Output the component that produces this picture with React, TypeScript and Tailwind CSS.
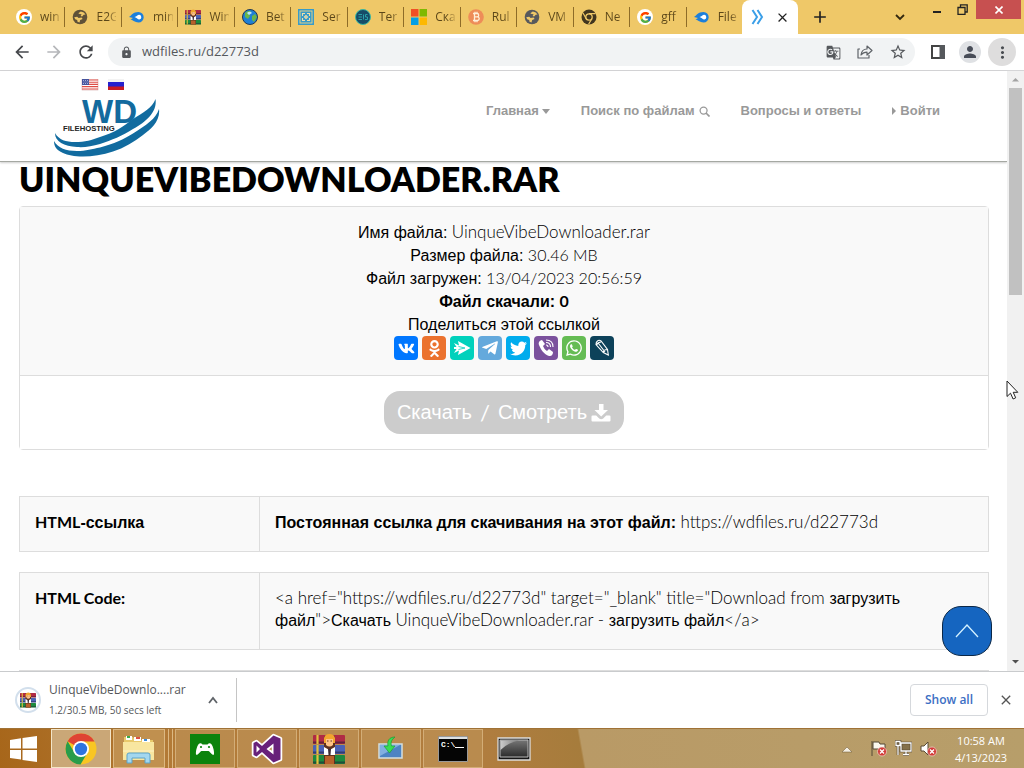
import React from 'react';
import { FaVk, FaOdnoklassniki, FaTelegramPlane, FaTwitter, FaWhatsapp } from 'react-icons/fa';
import { MdArrowBack, MdArrowForward, MdRefresh, MdLock, MdPerson, MdMoreVert, MdGTranslate, MdStarBorder, MdClose, MdAdd } from 'react-icons/md';
import { FcGoogle } from 'react-icons/fc';

const UI = "font-['Open_Sans','Noto_Sans',sans-serif]";
const ARIAL = "font-['Liberation_Sans',Arial,sans-serif]";

function L({ children }: { children: React.ReactNode }) {
  return <span className="font-['Lato',sans-serif] text-[17px]/[16px] font-light">{children}</span>;
}

function Num({ children }: { children: React.ReactNode }) {
  return <span className="font-['Lato',sans-serif] text-[16px]/[16px] font-light">{children}</span>;
}

function Strong({ children }: { children: React.ReactNode }) {
  return <span className="font-['Lato',sans-serif] text-[16px]/[16px] font-bold">{children}</span>;
}

function GoogleIcon() {
  return (
    <span className="flex size-4 items-center justify-center rounded-full bg-white">
      <FcGoogle size={13} />
    </span>
  );
}

function GlobeIcon({ color }: { color: string }) {
  return (
    <svg viewBox="0 0 16 16" className="size-4">
      <circle cx="8" cy="8" r="7.3" fill={color} />
      <path d="M2.200 8.300l3-.6 1.400 1.200 3-.3 1 1.500-2.400 1-.7 2.400-2-.8-.3-1.600-2-.8zM6.300 4.200l2.500-1.600 3 1 1.700 2-1.800.2-1.600 1.600-1.500-.5 1-1.600-2-.2z" fill="#efc868" />
    </svg>
  );
}

function ArrowBlobIcon() {
  return (
    <svg viewBox="0 0 16 16" className="size-4">
      <path d="M0 8C3 6 4 3 9.500 3a5.200 5.200 0 0 1 0 10.400C5.500 13.400 4.500 11 1.500 10.500L4 9z" fill="#1c7fdb" />
      <path d="M5.500 8.100C8 7.500 8.500 5.600 10.400 5.800a2.400 2.400 0 0 1 0 4.700C8.500 10.500 8 8.800 5.500 8.100z" fill="#fff" />
    </svg>
  );
}

function BooksIcon({ className }: { className: string }) {
  return (
    <svg viewBox="0 0 32 32" className={className}>
      <rect x="0" y="2" width="32" height="9" rx="1" fill="#b02a45" />
      <rect x="0" y="12" width="32" height="9" rx="1" fill="#4a62b5" />
      <rect x="0" y="22" width="32" height="9" rx="1" fill="#1d8a3e" />
      <path d="M0 9.500h32M0 19.500h32M0 29.500h32" stroke="#221c38" strokeOpacity=".55" strokeWidth="2" />
      <path d="M4.500 2v9M4.500 12v9M4.500 22v9" stroke="#e3c23c" strokeWidth="2.200" />
      <rect x="11" y="3" width="11" height="28" fill="#5d3220" />
      <path d="M11 10V5q1-4 5.500-4T22 5v5z" fill="#f2a52e" />
      <path d="M13 6h7v6q-3.500 3-7 0z" fill="#ffc488" />
      <path d="M14 8h1.500M17.500 8H19" stroke="#6b3a1e" />
      <path d="M11 14l5.500 3 5.500-3v8H11z" fill="#fff" />
      <path d="M15 16h3l-.5 6h-2z" fill="#3b2a35" />
      <rect x="12" y="23" width="9" height="8" fill="#b8602a" />
    </svg>
  );
}

function EarthIcon() {
  return (
    <svg viewBox="0 0 16 16" className="size-4">
      <circle cx="8" cy="8" r="7.500" fill="#1f7fd6" stroke="#22384e" />
      <path d="M3 4c3-3 6-2 6-1L7 5l1 2-2 3-3-2zM10 7l3-2 2 3-3 5-2-2z" fill="#69b64b" />
      <path d="M5 4c2-2 4-1 5 0L7 6z" fill="#b8e6ff" />
    </svg>
  );
}

function FrameIcon() {
  return (
    <svg viewBox="0 0 16 16" className="size-4">
      <rect width="16" height="16" fill="#379bc9" />
      <rect x="2" y="2" width="12" height="12" fill="none" stroke="#f1d583" strokeWidth=".9" />
      <path d="M7 4.500H4.500V7M9 4.500h2.500V7M11.500 9v2.500H9M7 11.500H4.500V9M6.500 8L8 6.500 9.500 8 8 9.500z" fill="none" stroke="#f1e0a8" strokeWidth="1.100" />
    </svg>
  );
}

function SwirlIcon() {
  return (
    <svg viewBox="0 0 16 16" className="size-4">
      <circle cx="8" cy="8" r="7.500" fill="#174c67" stroke="#37b8a4" />
      <path d="M3.500 5.500H7M3.500 8H7M3.500 10.500H7M8.500 5.500v5M12.500 5.500h-2v2.500h2v2.500h-2.500" stroke="#2aa0a8" fill="none" />
    </svg>
  );
}

function WindowsTiles() {
  return (
    <svg viewBox="0 0 16 16" className="size-4">
      <path fill="#f04f25" d="M0 0h7.500v7.500H0z" />
      <path fill="#7fb900" d="M8.500 0H16v7.500H8.500z" />
      <path fill="#049fe4" d="M0 8.500h7.500V16H0z" />
      <path fill="#fdb800" d="M8.500 8.500H16V16H8.500z" />
    </svg>
  );
}

function CoinIcon() {
  return (
    <svg viewBox="0 0 16 16" className="size-4">
      <circle cx="8" cy="8" r="7.800" fill="#ee8d58" />
      <path d="M5 4.500h4a1.600 1.600 0 0 1 0 3.400H6.500 9.400a1.700 1.700 0 0 1 0 3.600H5M6.500 4.500v7M7 2.800v1.700M9 2.800v1.700M7 11.500v1.700M9 11.500v1.700" fill="none" stroke="#fff0d8" strokeWidth="1.300" />
    </svg>
  );
}

function DarkChromeIcon() {
  return (
    <svg viewBox="0 0 16 16" className="size-4">
      <circle cx="8" cy="8" r="7.500" fill="#41351f" />
      <circle cx="8" cy="8" r="3.200" fill="#41351f" stroke="#efc868" strokeWidth="1.300" />
      <path d="M8 4.700h6.500M5.200 9.700L2 4M10.800 9.700l-3.200 5.600" stroke="#efc868" strokeWidth="1.200" />
    </svg>
  );
}

const tabs: { name: string; icon: React.ReactNode }[] = [
  { name: 'win', icon: <GoogleIcon /> },
  { name: 'E2G', icon: <GlobeIcon color="#5f5138" /> },
  { name: 'min', icon: <ArrowBlobIcon /> },
  { name: 'Win', icon: <BooksIcon className="size-4" /> },
  { name: 'Bet', icon: <EarthIcon /> },
  { name: 'Ser', icon: <FrameIcon /> },
  { name: 'Ter', icon: <SwirlIcon /> },
  { name: 'Ска', icon: <WindowsTiles /> },
  { name: 'Rul', icon: <CoinIcon /> },
  { name: 'VM', icon: <GlobeIcon color="#58595c" /> },
  { name: 'Ne', icon: <DarkChromeIcon /> },
  { name: 'gff', icon: <GoogleIcon /> },
  { name: 'File', icon: <ArrowBlobIcon /> },
];

function TabStrip() {
  return (
    <div className={`flex h-[34px] shrink-0 bg-[#efc868] ${UI}`}>
      <div className="flex min-w-0 flex-1 items-center pl-[9px]">
        {tabs.map((t, i) => (
          <button key={i} className={`flex h-5 min-w-0 flex-1 items-center gap-2 pr-1 pl-[7px] ${i < 12 ? 'border-r border-[#8e6c28]' : ''}`}>
            <span className="shrink-0">{t.icon}</span>
            <span className="w-5 overflow-hidden bg-linear-to-r from-[#5b4618] from-60% to-[#d2ac55] bg-clip-text text-left text-[12px] whitespace-nowrap text-transparent">{t.name}</span>
          </button>
        ))}
      </div>
      <div className="flex w-[282px] shrink-0 justify-between">
        <div className="flex">
          <div className="flex w-14 items-center justify-between rounded-t-lg bg-white pr-2 pl-2">
            <svg viewBox="0 0 16 16" className="size-4">
              <path d="M2.500 1l4.500 7-4.500 7M7.500 1l4.500 7-4.500 7" fill="none" stroke="#3b9fe8" strokeWidth="2" />
            </svg>
            <button aria-label="Close tab"><MdClose size={15} color="#222" /></button>
          </div>
          <button aria-label="New tab" className="ml-3 flex w-5 items-center justify-center"><MdAdd size={20} color="#222" /></button>
        </div>
        <div className="flex items-start">
          <button aria-label="Search tabs" className="mt-3 mr-7 p-0">
            <svg viewBox="0 0 10 10" className="size-[10px]"><path d="M1 3l4 4 4-4" fill="none" stroke="#33280f" strokeWidth="1.800" /></svg>
          </button>
          <button aria-label="Minimize" className="mr-4 h-[13px]"><span className="mt-[11px] block h-[2px] w-2 bg-[#222]" /></button>
          <button aria-label="Restore" className="mt-1 mr-2">
            <svg viewBox="0 0 11 11" className="size-[11px]"><path d="M1 3.500h7v7H1zM3.500 3V.8h6.700V8H8" fill="none" stroke="#222" strokeWidth="1.300" /></svg>
          </button>
          <button aria-label="Close window" className="flex h-[19px] w-[45px] items-center justify-center bg-[#c75050]">
            <svg viewBox="0 0 8 8" className="size-2"><path d="M.5.500l7 7M7.500.500l-7 7" stroke="#fff" strokeWidth="1.600" /></svg>
          </button>
          <span className="w-[3px]" />
        </div>
      </div>
    </div>
  );
}

function Toolbar() {
  return (
    <div className={`flex h-[37px] shrink-0 items-center border-b border-[#d5d5d7] bg-white pr-2 pl-3 ${UI}`}>
      <div className="flex w-24 gap-3 text-[#46484c]">
        <button aria-label="Back"><MdArrowBack size={20} /></button>
        <button aria-label="Forward" className="text-[#b5b7ba]"><MdArrowForward size={20} /></button>
        <button aria-label="Reload"><MdRefresh size={20} /></button>
      </div>
      <div className="flex h-7 flex-1 items-center rounded-full bg-[#f1f3f4] pr-2 pl-3 text-[#55585c]">
        <MdLock size={13} />
        <input aria-label="Address" className="ml-[9px] min-w-0 flex-1 bg-transparent text-[13px] text-[#55585c] outline-none" defaultValue="wdfiles.ru/d22773d" />
        <div className="flex items-center gap-4">
          <button aria-label="Translate"><MdGTranslate size={15} /></button>
          <button aria-label="Share">
            <svg viewBox="0 0 16 16" className="size-4"><path d="M3 5H1v9h11v-3M4 11c.5-4 3-6 6-6V2l5 4.500L10 11V8.200c-3 0-4.500.8-6 2.800z" fill="none" stroke="#5f6368" strokeWidth="1.200" strokeLinejoin="round" /></svg>
          </button>
          <button aria-label="Bookmark"><MdStarBorder size={18} /></button>
        </div>
      </div>
      <div className="ml-4 flex items-center">
        <button aria-label="Side panel">
          <svg viewBox="0 0 14 14" className="size-[14px]"><path d="M1 1h12v12H1z" fill="none" stroke="#444" strokeWidth="2" /><path d="M8.500 0H14v14H8.500z" fill="#55585c" /></svg>
        </button>
        <button aria-label="Profile" className="ml-[14px] flex size-[22px] items-center justify-center rounded-full bg-[#dfe1e4] text-[#484d58]"><MdPerson size={18} /></button>
        <button aria-label="Menu" className="ml-[7px] flex size-[28px] items-center justify-center rounded-full bg-[#dedddd] text-[#484b50]"><MdMoreVert size={19} /></button>
      </div>
    </div>
  );
}

function Logo() {
  return (
    <svg viewBox="0 0 106 78" className="h-[78px] w-[106px]" aria-label="WD Filehosting">
      <g>
        <rect x="28" y="0" width="16" height="11" fill="#fff" stroke="#c99" strokeWidth=".5" />
        <path d="M28 1h16M28 3.200h16M28 5.400h16M28 7.600h16M28 10h16" stroke="#dd4c45" strokeWidth="1.100" />
        <rect x="28" y="0" width="7" height="6" fill="#46549c" />
        <path d="M29 1.500h5M29.500 3h5M29 4.500h5" stroke="#ccd4ef" strokeWidth=".7" strokeDasharray="1 1" />
      </g>
      <g>
        <rect x="54" y="0" width="16" height="4" fill="#f3f3f3" />
        <rect x="54" y="3" width="16" height="5" fill="#2521cf" />
        <rect x="54" y="7.500" width="16" height="3.500" fill="#c91b22" />
      </g>
      <text x="28" y="44" fontFamily="Liberation Sans" fontWeight="bold" fontSize="33" fill="#136a9e">WD</text>
      <text x="9" y="52" fontFamily="Liberation Sans" fontWeight="bold" fontSize="7.700" fill="#222">FILEHOSTING</text>
      <path d="M1 54C5 61 12 63 21 63 31 63 38 61 46 58 60 54 70 47 79 40 90 33 98 29 101.500 20 103.500 33 92 43 79 50 68 57 58 61 46 65 38 67.500 30 68.500 23 68 10 67 1 63 1 54z" fill="#116b9f" />
      <path d="M0 62C4 69 12 72 23 72 32 72 38 70 46 68.500 60 65 70 60 79 54.500 92 46 102 40 105 30 106.500 42 97 50 89 56 80 63 70 69 59 72.500 49 76 38 77.500 29 77.500 20 77.500 14 76 9 74 2 71 0 67 0 62z" fill="#116b9f" />
    </svg>
  );
}

const nav = 'flex items-center whitespace-nowrap text-[13px] font-bold text-[#999]';

function SiteHeader() {
  return (
    <header className="flex h-[91px] shrink-0 items-center justify-between border-b border-[#a5a8a2] bg-white pr-[67px] pl-[54px] shadow-[0_1px_2px_rgba(0,0,0,0.2)]">
      <a href="#home" className="mt-1"><Logo /></a>
      <nav className={`-mt-[10px] flex gap-[31px] ${ARIAL}`}>
        <a href="#main" className={`${nav} gap-[3px]`}>Главная <svg viewBox="0 0 8 5" className="h-[5px] w-2"><path d="M0 0h8L4 5z" fill="#999" /></svg></a>
        <a href="#search" className={`${nav} gap-1`}>Поиск по файлам
          <svg viewBox="0 0 12 12" className="size-[11px]"><circle cx="5" cy="5" r="3.800" fill="none" stroke="#999" strokeWidth="1.400" /><path d="M7.600 7.600L11.500 11.500" stroke="#999" strokeWidth="1.800" /></svg>
        </a>
        <a href="#faq" className={nav}>Вопросы и ответы</a>
        <a href="#login" className={`${nav} gap-1`}><svg viewBox="0 0 4 8" className="h-2 w-1"><path d="M0 0l4 4-4 4z" fill="#999" /></svg> Войти</a>
      </nav>
    </header>
  );
}

const shares: { name: string; bg: string; icon: React.ReactNode }[] = [
  { name: 'VK', bg: 'bg-[#0077ff]', icon: <FaVk size={17} /> },
  { name: 'Odnoklassniki', bg: 'bg-[#eb722e]', icon: <FaOdnoklassniki size={17} /> },
  { name: 'Surfingbird', bg: 'bg-[#00d1bc]', icon: <svg viewBox="0 0 24 24" className="size-6"><path d="M8 5l12.500 7L8 19l1-4.500L4 17l2.500-4H4v-2h2.500L4 7l5 2.500z" fill="#fff" /><path d="M8.500 10.500L15 12l-6.500 1.500" fill="none" stroke="#00d1bc" strokeWidth=".8" /></svg> },
  { name: 'Telegram', bg: 'bg-[#64a9dc]', icon: <FaTelegramPlane size={18} /> },
  { name: 'Twitter', bg: 'bg-[#00aced]', icon: <FaTwitter size={17} /> },
  { name: 'Viber', bg: 'bg-[#7b519d]', icon: <svg viewBox="0 0 24 24" className="size-6"><path d="M8 4c-2 .5-4 2-3 5 2 5 5 9 10 11 3 .5 4-2 4-4l-4-3-2 2c-2-1-3-3-4-5l2-2z" fill="#fff" /><path d="M12 4c5 0 7 3 7 7M12 6.500c3 0 4.500 1.500 4.500 4.500M12 9c1.500 0 2 1 2 2" fill="none" stroke="#fff" strokeWidth="1.100" /></svg> },
  { name: 'WhatsApp', bg: 'bg-[#65bc54]', icon: <FaWhatsapp size={18} /> },
  { name: 'LiveJournal', bg: 'bg-[#0d425a]', icon: <svg viewBox="0 0 24 24" className="size-6"><path d="M7.500 5C9 3.500 11 5 11 5l6.500 8.500.8 5.500-5-2.500L6 8.500S6 6 7.500 5zM6.500 9c1-2 3-3 4.500-3M8.500 7.500l6.500 8.500M13.300 16.500c0-2 2-3 4.200-3" fill="none" stroke="#fff" strokeWidth="1.100" /></svg> },
];

function FileCard() {
  return (
    <section className={`rounded-sm border border-[#ddd] ${ARIAL} text-center text-[16px]/[23px] text-black`}>
      <div className="border-b border-[#ddd] bg-[#f9f9f9] pt-[14px] pb-[15px]">
        <p className="h-[23px]">Имя файла: <L>UinqueVibeDownloader.rar</L></p>
        <p className="h-[23px]">Размер файла: <Num>30.46 MB</Num></p>
        <p className="h-[23px]">Файл загружен: <Num>13/04/2023 20:56:59</Num></p>
        <p className="h-[23px] font-bold">Файл скачали: <Strong>0</Strong></p>
        <p className="h-[23px]">Поделиться этой ссылкой</p>
        <div className="flex justify-center gap-1">
          {shares.map((s) => (
            <a key={s.name} href={`#${s.name}`} aria-label={s.name} className={`flex size-6 items-center justify-center rounded text-white ${s.bg}`}>{s.icon}</a>
          ))}
        </div>
      </div>
      <div className="flex justify-center bg-white py-[15px]">
        <button className="flex h-[43px] items-center rounded-2xl bg-[#ccc] px-[13px] text-[20px] text-white">
          <span>Скачать</span>
          <span className="mx-2 font-['Lato',sans-serif] text-[22px]">/</span>
          <span>Смотреть</span>
          <svg viewBox="0 0 20 20" className="ml-1 size-5">
            <path d="M8 1h4.500v6H17l-6.800 6.500L3.500 7H8z" fill="#fff" />
            <path d="M1.500 12.500h3.700l3 3q2 1.300 4 0l3-3h3.300q1 0 1 1v4q0 1-1 1h-17q-1 0-1-1v-4q0-1 1-1z" fill="#fff" />
          </svg>
        </button>
      </div>
    </section>
  );
}

function Row({ label, children }: { label: React.ReactNode; children: React.ReactNode }) {
  return (
    <table className={`mb-5 w-full table-fixed border-collapse bg-[#f9f9f9] ${ARIAL} text-[16px]/[22px] text-black`}>
      <tbody>
        <tr>
          <th scope="row" className="w-60 border border-[#ddd] px-[15px] pt-[15px] pb-[17px] text-left align-top font-bold">{label}</th>
          <td className="border border-[#ddd] px-[15px] pt-[15px] pb-[17px] align-top">{children}</td>
        </tr>
      </tbody>
    </table>
  );
}

function Page() {
  return (
    <div className="relative flex min-h-0 flex-1 bg-white">
      <div className="flex min-w-0 flex-1 flex-col">
        <SiteHeader />
        <main className="min-h-0 flex-1 overflow-hidden pr-[18px] pl-[19px]">
          <h1 className="h-11 font-['Lato',sans-serif] text-[34px]/[34px] font-extrabold text-black">UINQUEVIBEDOWNLOADER.RAR</h1>
          <FileCard />
          <div className="mt-[46px]">
            <Row label={<><Strong>HTML</Strong>-ссылка</>}>
              <b>Постоянная ссылка для скачивания на этот файл:</b> <L>https://wdfiles.ru/d22773d</L>
            </Row>
            <Row label={<Strong>HTML Code:</Strong>}>
              <L>&lt;a href="https://wdfiles.ru/d22773d" target="_blank" title="Download from </L>загрузить<br />
              файл<L>"&gt;</L>Скачать <L>UinqueVibeDownloader.rar - </L>загрузить файл<L>&lt;/a&gt;</L>
            </Row>
            <Row label={<>&nbsp;</>}>&nbsp;</Row>
          </div>
        </main>
      </div>
      <div className="flex w-[17px] shrink-0 flex-col items-center bg-[#f1f1f1]">
        <svg viewBox="0 0 17 17" className="size-[17px] shrink-0"><path d="M5 10.500h7L8.500 7z" fill="#a3a3a3" /></svg>
        <div className="h-[207px] w-[13px] bg-[#c1c1c1]" />
        <div className="flex-1" />
        <svg viewBox="0 0 17 17" className="size-[17px] shrink-0"><path d="M5 6h7L8.500 9.500z" fill="#505050" /></svg>
      </div>
      <button aria-label="Scroll to top" className="absolute right-8 bottom-[15px] flex size-[50px] items-center justify-center rounded-[19px] border border-[#0a2747] bg-[#1565c0]">
        <svg viewBox="0 0 24 24" className="size-6"><path d="M1 18L12 6l11 12" fill="none" stroke="#d4f1ff" strokeWidth="1.300" /></svg>
      </button>
      <svg viewBox="0 0 13 20" className="absolute top-[309px] right-[5px] h-5 w-[13px]"><path d="M1 1v15.500l3.500-3.300 2.600 5.800 2.600-1.200-2.500-5.500h4.600z" fill="#fff" stroke="#222" /></svg>
    </div>
  );
}

function DownloadBar() {
  return (
    <div className={`flex h-[57px] shrink-0 items-center justify-between border-t border-[#c9cbcd] bg-white ${UI}`}>
      <div className="flex h-11 items-center border-r border-[#c5c5c5] pr-[17px] pl-[15px]">
        <div className="flex size-[26px] items-center justify-center rounded-full border-2 border-[#d2dfec]"><BooksIcon className="size-4" /></div>
        <div className="ml-2 w-[146px] text-[#55575a]">
          <p className="h-5 text-[12px]/[20px]">UinqueVibeDownlo....rar</p>
          <p className="h-5 text-[10px]/[20px]">1.2/30.5 MB, 50 secs left</p>
        </div>
        <button aria-label="Download options" className="ml-3">
          <svg viewBox="0 0 12 12" className="size-3"><path d="M2 9l4-5 4 5" fill="none" stroke="#5f6368" strokeWidth="1.800" /></svg>
        </button>
      </div>
      <div className="flex items-center gap-[10px] pr-[10px]">
        <button className="h-8 w-[78px] rounded border border-[#d5d8dc] text-[12px] font-semibold text-[#3c6fc4]">Show all</button>
        <button aria-label="Close downloads bar"><MdClose size={16} color="#555" /></button>
      </div>
    </div>
  );
}

function ChromeIcon() {
  return (
    <svg viewBox="0 0 32 32" className="size-8">
      <circle cx="16" cy="16" r="15.500" fill="#f9c623" />
      <path d="M16 16L2.600 8.300A15.500 15.500 0 0 1 29.500 8.500H16z" fill="#df4334" />
      <path d="M16 16l-6.500 3.700L2.600 8.300A15.500 15.500 0 0 0 15.500 31.500L22.500 19.700z" fill="#299c4b" />
      <circle cx="16" cy="16" r="8" fill="#fff" />
      <circle cx="16" cy="16" r="6.200" fill="#2f74df" />
    </svg>
  );
}

function FolderIcon() {
  return (
    <svg viewBox="0 0 34 32" className="h-8 w-[34px]">
      <path d="M2 4h9l2 3h18v20H2z" fill="#e9c96b" />
      <path d="M4 3h6v4H4zM12 4h7v4h-7zM20 6h8v4h-8z" fill="#fff" />
      <path d="M5 3h3v2H5z" fill="#3aab4b" /><path d="M14 4h4v2h-4z" fill="#de5144" /><path d="M22 6h3v2h-3z" fill="#3e8cd8" />
      <path d="M1 9h31v18H1z" fill="#f8e6a0" />
      <path d="M1 18h31" stroke="#fff3c4" />
      <path d="M5 30V22q0-2 2-2h19q2 0 2 2v8h-5v-5H10v5z" fill="#a3d7ef" stroke="#5ca3c8" />
    </svg>
  );
}

function GamepadIcon() {
  return (
    <svg viewBox="0 0 30 30" className="size-[30px]">
      <path d="M0 0h30v30H0z" fill="#0b830d" />
      <path d="M9.500 9.500q1.500-.8 3 1h5q1.500-1.800 3-1c2 1 4 7 3.500 11-1.500 1.500-4-3-5.500-3.500h-7c-1.500.5-4 5-5.500 3.500C5.500 16.500 7.500 10.500 9.500 9.500z" fill="#fff" />
      <circle cx="11" cy="13" r="1.100" fill="#0b830d" /><circle cx="19" cy="13" r="1.100" fill="#0b830d" />
    </svg>
  );
}

function VsIcon() {
  const shape = 'M22.500 2.500L29.500 5.500v21l-7 3L11 19l-5.500 4.500L2.500 22V10l3-1.500L11 13zM22.500 10.500L15.500 16l7 5.500zM5.500 12.500v7L9 16z';
  return (
    <svg viewBox="0 0 32 32" className="size-8">
      <path d={shape} fill="none" stroke="#fff" strokeWidth="3.500" strokeLinejoin="round" />
      <path d={shape} fill="#68217a" fillRule="evenodd" />
    </svg>
  );
}

function InstallIcon() {
  return (
    <svg viewBox="0 0 28 26" className="h-[26px] w-7">
      <path d="M2 8h23v14H2z" fill="#4c83c3" stroke="#d5dfdf" strokeWidth="1.500" />
      <path d="M3 9h20L3 20z" fill="#82afe0" />
      <path d="M18 1c-6 0-8 4-7 9H7l5.500 7 5.500-7h-3.500c-1-4 0-6 3.500-9z" fill="#38dd54" stroke="#1c9b35" strokeWidth=".7" />
    </svg>
  );
}

function ConsoleIcon() {
  return (
    <svg viewBox="0 0 30 26" className="h-[26px] w-[30px]">
      <path d="M.5.500h29v25H.5z" fill="#050505" stroke="#999" />
      <path d="M1 1h28v2H1z" fill="#dce0e2" />
      <text x="3" y="11" fontFamily="Liberation Mono" fontWeight="bold" fontSize="8" fill="#fff">C:\_</text>
      <path d="M17 11.500h9" stroke="#fff" />
    </svg>
  );
}

function MonitorIcon() {
  return (
    <svg viewBox="0 0 34 24" className="h-6 w-[34px]">
      <defs>
        <linearGradient id="screen" x1="0" y1="0" x2="0" y2="1">
          <stop offset="0" stopColor="#777" /><stop offset="1" stopColor="#2b2b2b" />
        </linearGradient>
        <linearGradient id="gloss" x1="0" y1="0" x2="1" y2="0">
          <stop offset="0" stopColor="#ccc" /><stop offset="1" stopColor="#777" />
        </linearGradient>
      </defs>
      <path d="M1 1h32v22H1z" fill="#161616" stroke="#ddd" strokeWidth="1.300" />
      <path d="M3 3h28v17H3z" fill="url(#screen)" stroke="#bbb" />
      <path d="M3.500 3.500H22Q12 5 3.500 13z" fill="url(#gloss)" />
    </svg>
  );
}

const apps: { name: string; icon: React.ReactNode }[] = [
  { name: 'Game', icon: <GamepadIcon /> },
  { name: 'Visual Studio', icon: <VsIcon /> },
  { name: 'WinRAR', icon: <BooksIcon className="size-8" /> },
  { name: 'Installer', icon: <InstallIcon /> },
  { name: 'Console', icon: <ConsoleIcon /> },
];

function RedCross() {
  return (
    <>
      <circle cx="12" cy="11.500" r="4.500" fill="#d23c39" stroke="#f4d8d0" strokeWidth=".7" />
      <path d="M10 9.500l4 4M14 9.500l-4 4" stroke="#fff" strokeWidth="1.300" />
    </>
  );
}

function Taskbar() {
  return (
    <div className={`flex h-10 shrink-0 items-center justify-between border-t border-[#a07236] bg-[linear-gradient(80deg,#a7661a_0px,#b37b38_180px,#b07d3f_480px,#a67c3c_575px,#b99a66_577px,#b79e6a_100%)] ${UI}`}>
      <div className="flex h-full items-center">
        <button aria-label="Start" className="flex w-[51px] justify-center pr-1">
          <svg viewBox="0 0 27 26" className="h-[26px] w-[27px]"><path d="M0 4l11-1.800V12.500H0zM12.500 2L27 0v12.500H12.500zM0 14h11v9.500L0 22zM12.500 14H27v12l-14.500-2z" fill="#fff" /></svg>
        </button>
        <button aria-label="Chrome" className="flex h-full w-[60px] items-center justify-center border border-[#f3e5c8] bg-[#caa777]"><ChromeIcon /></button>
        <div className="ml-[2px] flex h-full w-[62px] gap-[2px]">
          <button aria-label="File Explorer" className="flex h-full w-[52px] items-center justify-center border border-[#dcb882] bg-[#c0904f]"><FolderIcon /></button>
          <span className="h-full w-[2px] border-r border-[#dcb882]" />
          <span className="h-full w-[2px] border-r border-[#dcb882]" />
        </div>
        <div className="flex h-full gap-[2px]">
          {apps.map((a) => (
            <button key={a.name} aria-label={a.name} className="flex h-full w-[60px] items-center justify-center border border-[#d3ad77] bg-[#be9156]/70">{a.icon}</button>
          ))}
        </div>
        <button aria-label="Display" className="ml-[14px]"><MonitorIcon /></button>
      </div>
      <div className="flex items-center gap-2 pr-[15px] text-white">
        <svg viewBox="0 0 10 10" className="size-[10px]"><path d="M0 8l5-5 5 5z" fill="#f4eee2" stroke="#6b5432" strokeWidth=".5" /></svg>
        <svg viewBox="0 0 17 17" className="ml-[10px] size-[17px]"><path d="M2 1v15M3 2h6l1 2h5v7h-6l-1-2H3z" fill="#fbf8ef" stroke="#544936" /><RedCross /></svg>
        <svg viewBox="0 0 17 17" className="size-[17px]"><path d="M6 3h10v8H6zM8 14.500h6M11 11v3M1 1.500h4v4H1zM3 6v9" fill="#84704b" stroke="#4b3e2a" strokeWidth="2.500" /><path d="M6 3h10v8H6zM8 14.500h6M11 11v3M1 1.500h4v4H1zM3 6v9" fill="none" stroke="#fff" strokeWidth="1.300" /></svg>
        <svg viewBox="0 0 17 17" className="size-[17px]"><path d="M1 6h3l4-4v13l-4-4H1z" fill="#fff" stroke="#584b35" /><RedCross /></svg>
        <div className="ml-2 w-14 text-center text-[11px]/[17px] whitespace-nowrap"><p>10:58 AM</p><p>4/13/2023</p></div>
      </div>
    </div>
  );
}

export default function App() {
  return (
    <div className="flex h-screen w-full flex-col overflow-hidden bg-white">
      <TabStrip />
      <Toolbar />
      <Page />
      <DownloadBar />
      <Taskbar />
    </div>
  );
}
